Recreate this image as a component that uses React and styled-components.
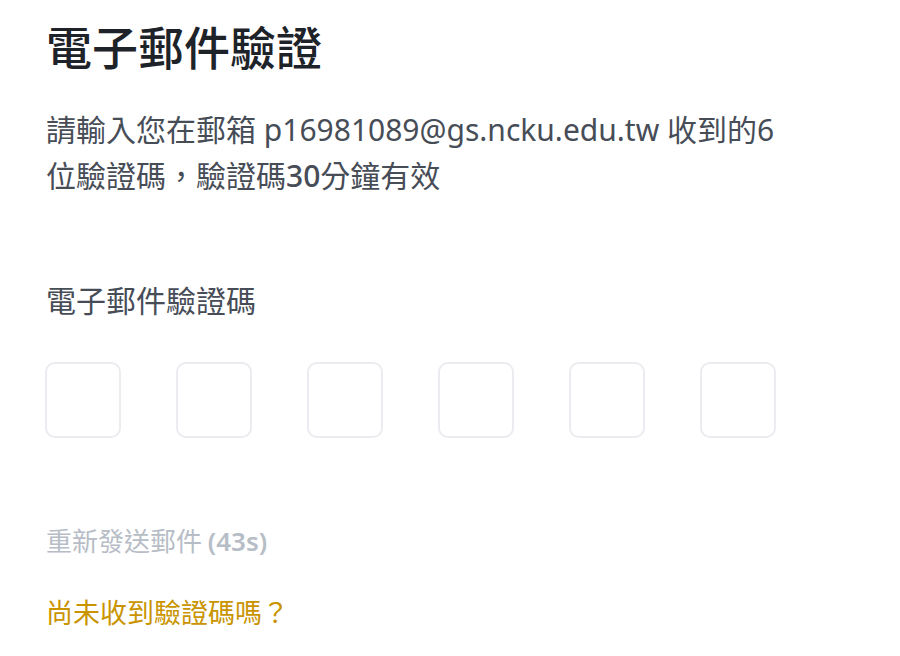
import React from "react";
import styled, { createGlobalStyle } from "styled-components";

const GlobalStyle = createGlobalStyle`
  body {
    margin: 0;
    background: #ffffff;
    font-family: "Noto Sans", "Noto Sans CJK TC", sans-serif;
  }
`;

const Page = styled.div`
  padding: 13px 0 0 45px;
  display: flex;
  flex-direction: column;
`;

const Title = styled.h1`
  margin: 0 0 0 1px;
  font-size: 46px;
  line-height: 64px;
  font-weight: 500;
  color: #1e2329;
  font-family: "Noto Sans CJK TC", sans-serif;
`;

const Desc = styled.p`
  margin: 30px 0 0 1px;
  width: 740px;
  font-size: 30px;
  line-height: 46px;
  color: #474d57;
  font-family: "Noto Sans", "Noto Sans CJK TC", sans-serif;

  b {
    font-weight: 500;
  }
`;

const Label = styled.div`
  margin: 77px 0 0 1px;
  font-size: 30px;
  line-height: 46px;
  color: #474d57;
  font-family: "Noto Sans CJK TC", sans-serif;
`;

const CodeRow = styled.div`
  margin-top: 40px;
  display: flex;
  gap: 55px;
`;

const CodeBox = styled.input`
  width: 76px;
  height: 76px;
  box-sizing: border-box;
  border: 2px solid #eaecef;
  border-radius: 10px;
  background: #fff;
  outline: none;
  margin: 0;
  padding: 0;
  text-align: center;
  font-size: 30px;
`;

const Resend = styled.div`
  margin: 82px 0 0 1px;
  font-size: 26px;
  line-height: 40px;
  color: #b7bdc6;
  font-family: "Noto Sans CJK TC", sans-serif;

  b {
    font-family: "Noto Sans", sans-serif;
    font-weight: 600;
  }
`;

const HelpLink = styled.a`
  margin: 31px 0 0 1px;
  font-size: 27px;
  line-height: 40px;
  color: #c99400;
  text-decoration: none;
  font-family: "Noto Sans CJK TC", sans-serif;
`;

export default function App() {
  return (
    <>
      <GlobalStyle />
      <Page>
        <Title>電子郵件驗證</Title>
        <Desc>
          請輸入您在郵箱 p16981089@gs.ncku.edu.tw 收到的6位驗證碼，驗證碼<b>30</b>分鐘有效
        </Desc>
        <Label>電子郵件驗證碼</Label>
        <CodeRow>
          {[0, 1, 2, 3, 4, 5].map((i) => (
            <CodeBox key={i} maxLength={1} />
          ))}
        </CodeRow>
        <Resend>
          重新發送郵件 <b>(43s)</b>
        </Resend>
        <HelpLink href="#">尚未收到驗證碼嗎？</HelpLink>
      </Page>
    </>
  );
}
